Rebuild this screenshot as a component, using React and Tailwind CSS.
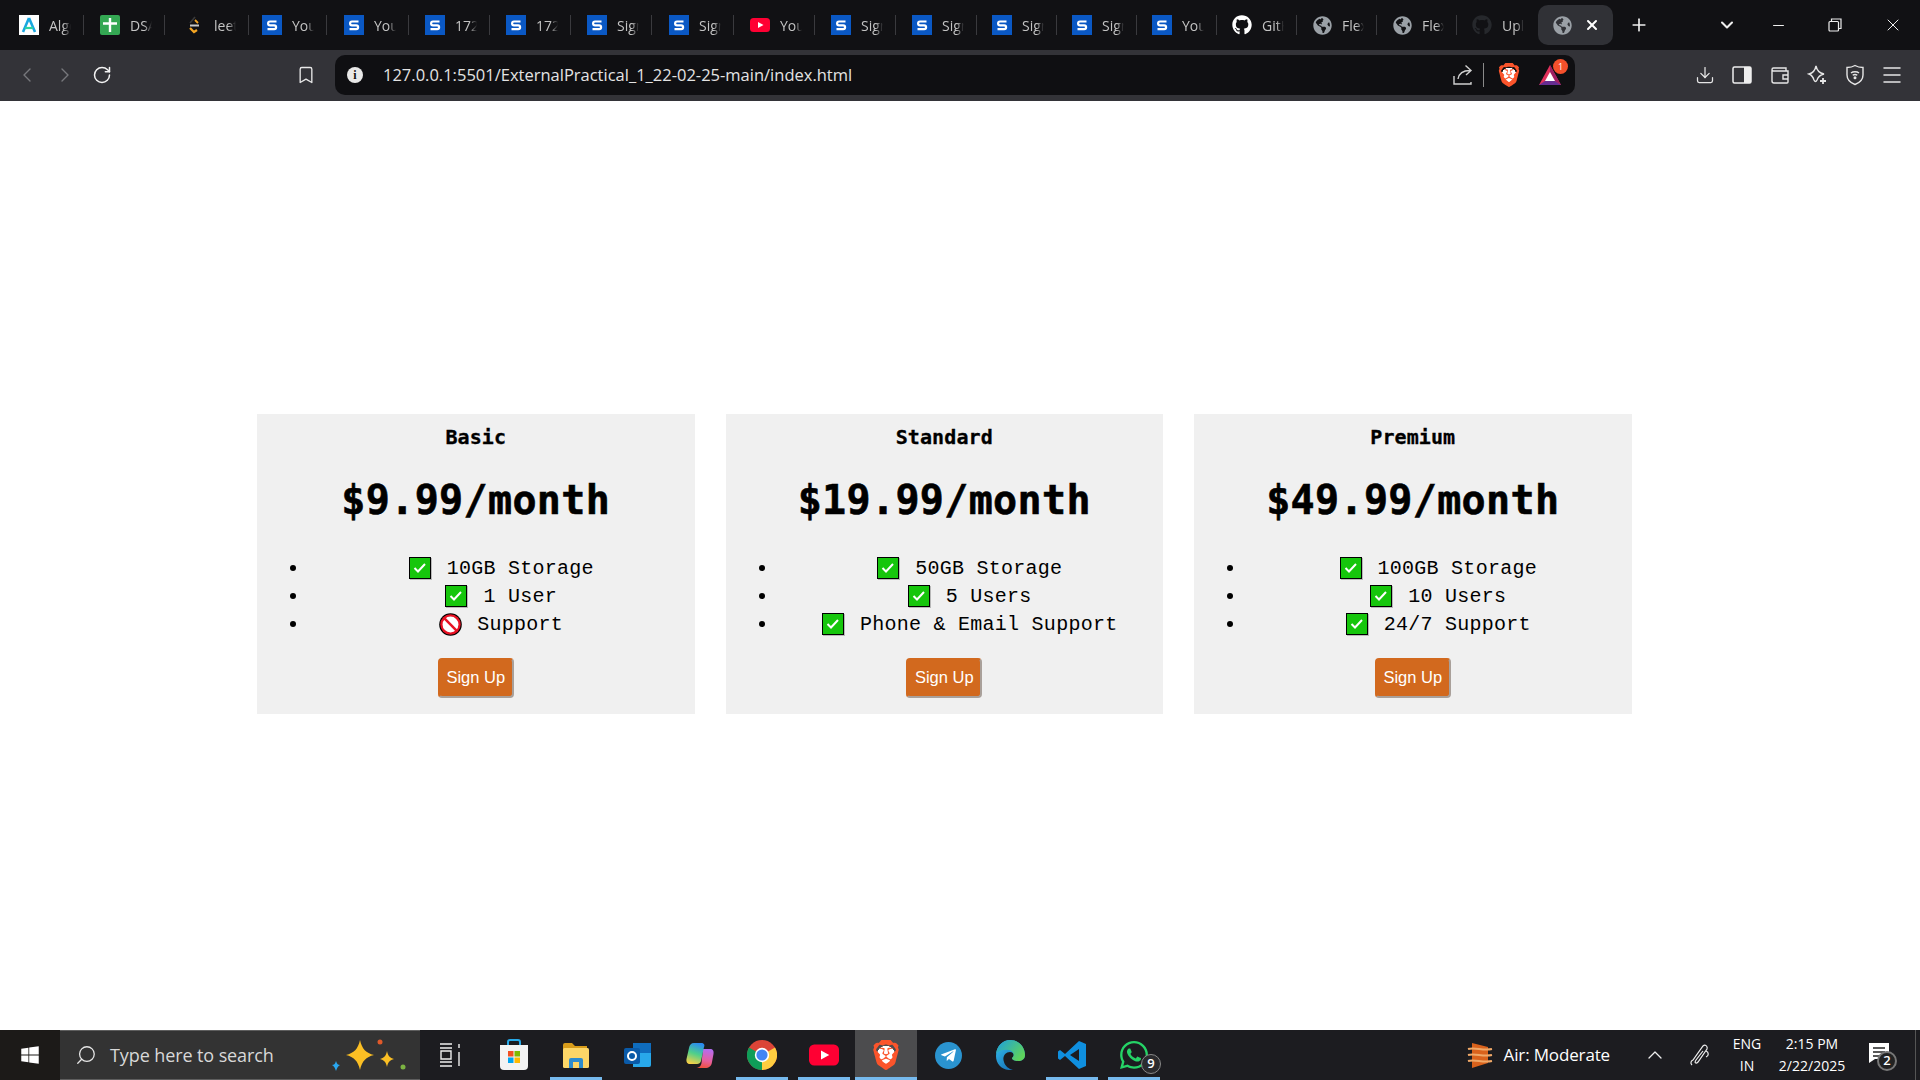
import {
  ChevronLeft,
  ChevronRight,
  ChevronDown,
  ChevronUp,
  RotateCw,
  Bookmark,
  Plus,
  Minus,
  X,
  Download,
  Menu,
  Search,
} from "lucide-react";
import { FaGithub, FaGlobeAmericas, FaWindows, FaWhatsapp, FaTelegramPlane } from "react-icons/fa";
import { SiBrave } from "react-icons/si";

const SANS = "font-['Open_Sans','Liberation_Sans',sans-serif]";

function SiteS() {
  return (
    <svg width="20" height="20" viewBox="0 0 20 20">
      <rect width="20" height="20" fill="#0a58c4" />
      <path d="M14.5 6.5 H8 a1.9 1.9 0 0 0 0 3.8 h4.2 a1.9 1.9 0 0 1 0 3.8 H5.5" fill="none" stroke="#fff" strokeWidth="2.2" />
    </svg>
  );
}

function AlgoIcon() {
  return (
    <svg width="20" height="20" viewBox="0 0 20 20">
      <rect width="20" height="20" fill="#fff" />
      <path d="M10 3 L4 17 M10 3 L16 17" stroke="#19a7e0" strokeWidth="2.6" fill="none" />
      <path d="M6 13 H14" stroke="#2fd3a0" strokeWidth="2.2" />
    </svg>
  );
}

function SheetIcon() {
  return (
    <svg width="20" height="20" viewBox="0 0 20 20">
      <rect width="20" height="20" rx="2" fill="#34a853" />
      <path d="M10 3 V17 M3 8.5 H17" stroke="#fff" strokeWidth="2.4" />
    </svg>
  );
}

function LeetIcon() {
  return (
    <svg width="20" height="20" viewBox="0 0 20 20">
      <path d="M11 2 L6 8" stroke="#3a3a3a" strokeWidth="1.6" fill="none" />
      <path d="M6 13 L10 17 L13 15" stroke="#f5a623" strokeWidth="2.2" fill="none" />
      <path d="M11 5 L14 8" stroke="#f5a623" strokeWidth="1.8" fill="none" />
      <path d="M6 10.5 H15" stroke="#c8c8c8" strokeWidth="2" />
    </svg>
  );
}

function YoutubeIcon({ size = 20 }) {
  return (
    <svg width={size} height={size} viewBox="0 0 20 20">
      <rect x="0" y="3" width="20" height="14" rx="3.5" fill="#ff0033" />
      <path d="M8 7 L13.5 10 L8 13 Z" fill="#fff" />
    </svg>
  );
}

function BraveIcon({ size }) {
  return (
    <span className="flex bg-[radial-gradient(circle,#fff_42%,transparent_44%)]">
      <SiBrave size={size} color="#fb542b" />
    </span>
  );
}

const tabs = [
  { w: 81, icon: <AlgoIcon />, label: "Algorithms" },
  { w: 84, icon: <SheetIcon />, label: "DSA Sheet" },
  { w: 78, icon: <LeetIcon />, label: "leetcode" },
  { w: 82, icon: <SiteS />, label: "Your" },
  { w: 81, icon: <SiteS />, label: "Your" },
  { w: 81, icon: <SiteS />, label: "172.16" },
  { w: 81, icon: <SiteS />, label: "172.16" },
  { w: 82, icon: <SiteS />, label: "Sign" },
  { w: 81, icon: <SiteS />, label: "Sign" },
  { w: 81, icon: <YoutubeIcon />, label: "YouTube" },
  { w: 81, icon: <SiteS />, label: "Sign" },
  { w: 80, icon: <SiteS />, label: "Sign" },
  { w: 80, icon: <SiteS />, label: "Sign" },
  { w: 80, icon: <SiteS />, label: "Sign" },
  { w: 80, icon: <SiteS />, label: "Your" },
  { w: 80, icon: <FaGithub size={20} color="#fff" />, label: "GitHub" },
  { w: 80, icon: <FaGlobeAmericas size={19} color="#9aa0a6" />, label: "Flex" },
  { w: 80, icon: <FaGlobeAmericas size={19} color="#9aa0a6" />, label: "Flex" },
  { w: 66, icon: <FaGithub size={20} color="#26282c" />, label: "Upload", last: true },
];

function TabBar() {
  return (
    <div className="flex h-[50px] shrink-0 items-center bg-[#111114] pl-[19px]">
      {tabs.map((tab, i) => (
        <div key={i} className="relative flex h-[40px] shrink-0 items-center" style={{ width: tab.w }}>
          <span className="flex w-[20px] justify-center">{tab.icon}</span>
          <span className={`ml-[10px] w-[22px] overflow-hidden whitespace-nowrap text-[14px] text-[#c4c4c4] [mask-image:linear-gradient(90deg,#000_65%,transparent)] ${SANS}`}>
            {tab.label}
          </span>
          {!tab.last && <span className="absolute left-[64px] top-[10px] h-[20px] w-px bg-[#3a3a3e]" />}
        </div>
      ))}
      <div className="flex h-[40px] w-[75px] shrink-0 items-center rounded-[10px] bg-[#303136] pl-[15px]">
        <FaGlobeAmericas size={19} color="#9aa0a6" />
        <X size={16} strokeWidth={3} color="#fff" className="ml-[12px]" />
      </div>
      <Plus size={20} strokeWidth={2} color="#eee" className="ml-[16px]" />
      <ChevronDown size={20} strokeWidth={2.5} color="#eee" className="ml-[68px]" />
      <Minus size={17} strokeWidth={1.5} color="#eee" className="ml-[33px]" />
      <svg width="14" height="14" viewBox="0 0 14 14" className="ml-[41px]" fill="none" stroke="#eee" strokeWidth="1.2">
        <rect x="1" y="3.5" width="9.5" height="9.5" rx="1" />
        <path d="M3.5 3.5 V1 H13 V10.5 H10.5" />
      </svg>
      <X size={20} strokeWidth={1.2} color="#eee" className="ml-[41px]" />
    </div>
  );
}

function Toolbar() {
  return (
    <div className="flex h-[51px] shrink-0 items-center bg-[#333338] pb-[1px]">
      <ChevronLeft size={24} strokeWidth={1.4} color="#77787c" className="ml-[15px]" />
      <ChevronRight size={24} strokeWidth={1.4} color="#77787c" className="ml-[14px]" />
      <RotateCw size={20} strokeWidth={1.8} color="#f2f2f2" className="ml-[15px]" />
      <Bookmark size={20} strokeWidth={1.6} color="#e8e8e8" className="ml-[184px]" />
      <div className="ml-[19px] flex h-[40px] w-[1240px] items-center rounded-[10px] bg-[#0f0f12] pl-[12px]">
        <span className="flex h-[16px] w-[16px] items-center justify-center rounded-full bg-[#e8e8e8] font-['Liberation_Serif',serif] text-[12px] font-bold leading-none text-[#111]">
          i
        </span>
        <span className={`ml-[20px] whitespace-nowrap text-[16.5px] text-[#e3e3e3] ${SANS}`}>
          127.0.0.1:5501/ExternalPractical_1_22-02-25-main/index.html
        </span>
        <div className="ml-auto flex items-center pr-[13px]">
          <svg width="20" height="22" viewBox="0 0 20 22" fill="none" stroke="#d0d0d0" strokeWidth="1.4">
            <path d="M1 12 V20 H18 V18 M5 15 C6 9 10 6.5 17 6.5 M12.5 1.5 L18 6.5 L13 11" />
          </svg>
          <span className="ml-[10px] h-[24px] w-px bg-[#8a8a8a]" />
          <span className="ml-[13px]">
            <BraveIcon size={24} />
          </span>
          <div className="relative ml-[17px] h-[24px] w-[24px]">
            <svg width="24" height="24" viewBox="0 0 24 24">
              <path d="M12 2 L23 22 H1 Z" fill="#e0315b" />
              <path d="M12 2 L23 22 L17 18 L12 9 Z" fill="#9e1f63" />
              <path d="M12 9 L17 18 H7 Z" fill="#fff" />
              <path d="M1 22 L7 18 H17 L23 22 Z" fill="#662d91" />
            </svg>
            <span className={`absolute -right-[6px] -top-[4px] flex h-[15px] w-[15px] items-center justify-center rounded-full bg-[#f4502c] text-[9px] leading-none text-white ${SANS}`}>
              1
            </span>
          </div>
        </div>
      </div>
      <Download size={20} strokeWidth={1.5} color="#e6e6e6" className="ml-[120px]" />
      <svg width="20" height="20" viewBox="0 0 20 20" className="ml-[17px]">
        <rect x="1" y="2" width="18" height="16" rx="1.5" fill="none" stroke="#eee" strokeWidth="1.5" />
        <rect x="12" y="2" width="7" height="16" fill="#eee" />
      </svg>
      <svg width="20" height="20" viewBox="0 0 20 20" className="ml-[18px]" fill="none" stroke="#e6e6e6" strokeWidth="1.4">
        <path d="M2 5 V16 a2 2 0 0 0 2 2 H17 a1 1 0 0 0 1 -1 V6 H3.5 A1.5 1.5 0 0 1 2 4.5 A1.5 1.5 0 0 1 3.5 3 H16 V6" />
        <path d="M18 10 H13 V14 H18" />
      </svg>
      <svg width="20" height="22" viewBox="0 0 20 22" className="ml-[17px]" fill="none" stroke="#e6e6e6" strokeWidth="1.4">
        <path d="M9 2 C10 7 12 9 17 10 C13 11 11 13 10 16 C9 18 8 18 7 16 C6 13 5 11 2 10 C6 9 8 7 9 2 Z" />
        <path d="M16 14 V20 M13 17 H19" strokeWidth="1.8" />
      </svg>
      <svg width="20" height="22" viewBox="0 0 20 22" className="ml-[18px]" fill="none" stroke="#e6e6e6" strokeWidth="1.4">
        <path d="M10 1.5 C12.5 3 15 3.5 18 3.5 V11 C18 16 14 19 10 20.5 C6 19 2 16 2 11 V3.5 C5 3.5 7.5 3 10 1.5 Z" />
        <path d="M6 9 C8 7.3 12 7.3 14 9 M7.7 11.3 C9 10.3 11 10.3 12.3 11.3" />
        <circle cx="10" cy="13.7" r="0.8" fill="#e6e6e6" />
      </svg>
      <Menu size={24} strokeWidth={1.5} color="#e6e6e6" className="ml-[15px]" />
    </div>
  );
}

function CheckIcon() {
  return (
    <svg width="23" height="23" viewBox="0 0 23 23" className="shrink-0">
      <rect x="1" y="1" width="22" height="22" fill="#b8b8b8" />
      <rect x="0" y="0" width="22" height="22" fill="#000" />
      <rect x="1" y="1" width="20" height="20" fill="#16c60c" />
      <path d="M5.5 11 L9 14.5 L16 7" fill="none" stroke="#fff" strokeWidth="2" />
    </svg>
  );
}

function NoIcon() {
  return (
    <svg width="23" height="23" viewBox="0 0 22 22" className="shrink-0">
      <circle cx="11" cy="11" r="10.8" fill="#000" />
      <circle cx="11" cy="11" r="9.8" fill="#e81224" />
      <circle cx="11" cy="11" r="7.6" fill="#fff" />
      <path d="M4.5 4.5 L17.5 17.5" stroke="#e81224" strokeWidth="2.4" />
    </svg>
  );
}

const plans = [
  {
    name: "Basic",
    price: "$9.99/month",
    features: [
      { ok: true, text: "10GB Storage" },
      { ok: true, text: "1 User" },
      { ok: false, text: "Support" },
    ],
  },
  {
    name: "Standard",
    price: "$19.99/month",
    features: [
      { ok: true, text: "50GB Storage" },
      { ok: true, text: "5 Users" },
      { ok: true, text: "Phone & Email Support" },
    ],
  },
  {
    name: "Premium",
    price: "$49.99/month",
    features: [
      { ok: true, text: "100GB Storage" },
      { ok: true, text: "10 Users" },
      { ok: true, text: "24/7 Support" },
    ],
  },
];

function PlanCard({ plan }) {
  return (
    <div className="flex h-[300px] w-[437.5px] flex-col items-center bg-[#f0f0f0] pt-[12px] font-['Liberation_Mono',monospace] text-black">
      <h3 className="font-['DejaVu_Sans_Mono',monospace] text-[20px] font-bold leading-[23px] tracking-[0.1px] [-webkit-text-stroke:0.3px_#000]">{plan.name}</h3>
      <h1 className="mt-[29px] font-['DejaVu_Sans_Mono',monospace] text-[40px] font-bold leading-[45px] tracking-[0.35px] [-webkit-text-stroke:0.6px_#000]">{plan.price}</h1>
      <ul className="mt-[31px] w-full list-disc pl-[51px] text-center text-[20px] leading-[28px] tracking-[0.25px]">
        {plan.features.map((f) => (
          <li key={f.text} className="h-[28px]">
            <span className="inline-flex h-[28px] items-center gap-[15px] align-top">
              {f.ok ? <CheckIcon /> : <NoIcon />}
              <span className="pt-[1px]">{f.text}</span>
            </span>
          </li>
        ))}
      </ul>
      <button className="mt-[20px] h-[40px] w-[76px] rounded-[4px] border-2 border-t-[#d2691e] border-l-[#d2691e] border-r-[#a9a09a] border-b-[#a9a09a] bg-[#d2691e] pb-[2px] font-['Liberation_Sans',sans-serif] text-[16.5px] text-white">
        Sign Up
      </button>
    </div>
  );
}

function ChromeIcon() {
  return (
    <svg width="30" height="30" viewBox="0 0 30 30">
      <circle cx="15" cy="15" r="15" fill="#db4437" />
      <path d="M15 15 L2 7.5 A15 15 0 0 0 15 30 Z" fill="#0f9d58" />
      <path d="M15 15 L28 7.5 A15 15 0 0 1 15 30 Z" fill="#ffcd40" />
      <circle cx="15" cy="15" r="7.2" fill="#fff" />
      <circle cx="15" cy="15" r="5.6" fill="#4285f4" />
    </svg>
  );
}

function CopilotIcon() {
  return (
    <svg width="28" height="26" viewBox="0 0 28 26">
      <defs>
        <linearGradient id="cpa" x1="0.6" y1="0" x2="0.3" y2="1">
          <stop offset="0" stopColor="#2a8cf0" />
          <stop offset="0.5" stopColor="#4fd08a" />
          <stop offset="1" stopColor="#f7d046" />
        </linearGradient>
        <linearGradient id="cpb" x1="0.6" y1="0" x2="0.4" y2="1">
          <stop offset="0" stopColor="#b46cf0" />
          <stop offset="0.6" stopColor="#e85f9c" />
          <stop offset="1" stopColor="#f0503c" />
        </linearGradient>
      </defs>
      <path d="M17 7 H24 C27 7 28 9 27.5 12 L26 20 C25.5 24 23 26 19 26 H9 C13 26 15 24 15.5 21 Z" fill="url(#cpb)" />
      <path d="M8 1 H15 C18 1 19 3 18 5 L15 19 C14.5 21 13 22 11 22 H4 C1.5 22 0 20 0.5 17 L3 6 C3.5 3 5 1 8 1 Z" fill="url(#cpa)" />
    </svg>
  );
}

function StoreIcon() {
  return (
    <svg width="30" height="32" viewBox="0 0 30 32">
      <path d="M9 7 V3 a2 2 0 0 1 2 -2 H19 a2 2 0 0 1 2 2 V7" fill="none" stroke="#27a9e8" strokeWidth="2" />
      <path d="M1 6 H29 V27 a4 4 0 0 1 -4 4 H5 a4 4 0 0 1 -4 -4 Z" fill="#f3f3f3" />
      <rect x="9" y="12" width="5.5" height="5.5" fill="#f25022" />
      <rect x="15.5" y="12" width="5.5" height="5.5" fill="#7fba00" />
      <rect x="9" y="18.5" width="5.5" height="5.5" fill="#00a4ef" />
      <rect x="15.5" y="18.5" width="5.5" height="5.5" fill="#ffb900" />
    </svg>
  );
}

function FilesIcon() {
  return (
    <svg width="28" height="26" viewBox="0 0 28 26">
      <path d="M1 3 a2 2 0 0 1 2 -2 H10 L13 4 H25 V10 H1 Z" fill="#d89c1a" />
      <rect x="1" y="6" width="26" height="20" rx="1.5" fill="#fcd667" />
      <path d="M7 26 V18 a2 2 0 0 1 2 -2 H19 a2 2 0 0 1 2 2 V26 H17 V20 H11 V26 Z" fill="#2d8ccd" />
    </svg>
  );
}

function OutlookIcon() {
  return (
    <svg width="30" height="28" viewBox="0 0 30 28">
      <path d="M10 2 H26 a2 2 0 0 1 2 2 V24 a2 2 0 0 1 -2 2 H10 Z" fill="#28a8ea" />
      <path d="M10 2 H28 V12 H10 Z" fill="#0f6cbd" />
      <rect x="1" y="7" width="16" height="16" rx="2" fill="#0a5aa8" />
      <circle cx="9" cy="15" r="4" fill="none" stroke="#fff" strokeWidth="2" />
    </svg>
  );
}

function EdgeIcon() {
  return (
    <svg width="30" height="30" viewBox="0 0 30 30">
      <defs>
        <linearGradient id="edg" x1="0" y1="0" x2="1" y2="1">
          <stop offset="0" stopColor="#35c1f1" />
          <stop offset="1" stopColor="#0c59a4" />
        </linearGradient>
        <linearGradient id="edh" x1="0" y1="0" x2="1" y2="0.6">
          <stop offset="0" stopColor="#1b9de2" />
          <stop offset="1" stopColor="#5ed35b" />
        </linearGradient>
      </defs>
      <path d="M1 16 C1 6 8 0 15 0 C24 0 30 7 30 15 C30 19 27 21 23 21 C20 21 17 20 17 18 C20 16 19 12 15 12 C10 12 7 17 9 22 C10 26 14 29 18 30 C8 31 1 25 1 16 Z" fill="url(#edg)" />
      <path d="M1 14 C2 5 9 0 15 0 C24 0 30 7 30 15 C30 19 27 21 23 21 C20 21 17 20 17 18 C20 16 19 11 14 10 C8 9 3 11 1 14 Z" fill="url(#edh)" />
    </svg>
  );
}

function VscodeIcon() {
  return (
    <svg width="30" height="30" viewBox="0 0 30 30">
      <path d="M22 1 L29 4 V26 L22 29 L8 16 L3 20 L1 18.5 V11.5 L3 10 L8 14 Z M22 9 L13 15 L22 21 Z" fill="#0f8fdf" fillRule="evenodd" />
    </svg>
  );
}

const taskIcons = [
  { w: 62, icon: <StoreIcon /> },
  { w: 62, icon: <FilesIcon />, running: true },
  { w: 62, icon: <OutlookIcon /> },
  { w: 62, icon: <CopilotIcon /> },
  { w: 62, icon: <ChromeIcon />, running: true },
  { w: 62, icon: <YoutubeIcon size={30} />, running: true },
  { w: 62, icon: <BraveIcon size={30} />, active: true },
  {
    w: 62,
    icon: (
      <span className="flex h-[27px] w-[27px] items-center justify-center rounded-full bg-[#2a93cf]">
        <FaTelegramPlane size={17} color="#fff" />
      </span>
    ),
  },
  { w: 62, icon: <EdgeIcon /> },
  { w: 62, icon: <VscodeIcon />, running: true },
  { w: 62, icon: <FaWhatsapp size={32} color="#25d366" />, running: true, badge: "9" },
];

function Taskbar() {
  return (
    <div className={`flex h-[50px] shrink-0 items-center bg-[#1c1c20] text-white ${SANS}`}>
      <div className="flex h-full w-[60px] items-center justify-center bg-[#1c1a18]">
        <FaWindows size={20} color="#fff" />
      </div>
      <div className="flex h-full w-[360px] items-center border-y border-[#5e5e5e] bg-[#333333] pl-[15px]">
        <Search size={22} strokeWidth={1.4} color="#e6e6e6" className="-scale-x-100" />
        <span className="ml-[13px] text-[18px] tracking-[-0.1px] text-[#d8d8d8]">Type here to search</span>
        <svg width="78" height="36" viewBox="0 0 78 36" className="ml-auto mr-[12px]">
          <path d="M30 3 C32 12 36 16 44 18 C36 20 32 24 30 33 C28 24 24 20 16 18 C24 16 28 12 30 3 Z" fill="#fbbf24" />
          <path d="M57 14 C58 19 60 21 64 22 C60 23 58 25 57 30 C56 25 54 23 50 22 C54 21 56 19 57 14 Z" fill="#fbbf24" />
          <path d="M6 24 C7 27 8 28 10 28 C8 29 7 31 6 34 C5 31 4 29 2 28 C4 28 5 27 6 24 Z" fill="#2aa7f0" />
          <circle cx="50" cy="5" r="2.5" fill="#e0592a" />
          <circle cx="73" cy="30" r="2.5" fill="#7cb342" />
        </svg>
      </div>
      <div className="flex h-full w-[63px] items-center justify-center pr-[4px]">
        <svg width="22" height="24" viewBox="0 0 22 24" fill="none" stroke="#eee" strokeWidth="1.4">
          <path d="M1 1 H13 M1 5 H13 M2 8 H12 V16 H2 Z M1 19 H13 M1 23 H13" />
          <path d="M20 1 V5 M20 9 V23" />
        </svg>
      </div>
      {taskIcons.map((t, i) => (
        <div
          key={i}
          className={`relative flex h-full shrink-0 items-center justify-center ${t.active ? "bg-[#4c4c4e]" : ""}`}
          style={{ width: t.w }}
        >
          {t.icon}
          {t.badge && (
            <span className="absolute left-[38px] top-[24px] flex h-[20px] w-[20px] items-center justify-center rounded-full border border-[#888] bg-[#2b2b2e] text-[13px] font-semibold">
              {t.badge}
            </span>
          )}
          {(t.running || t.active) && (
            <span className={`absolute bottom-0 h-[3px] bg-[#76b9ed] ${t.active ? "inset-x-0" : "inset-x-[5px]"}`} />
          )}
        </div>
      ))}
      <div className="ml-auto flex h-full items-center pr-[4px]">
        <svg width="26" height="30" viewBox="0 0 26 30" className="-ml-[4px]">
          <path d="M5 3 L21 7 V23 L5 28 Z" fill="#d9621c" />
          <path d="M1 9 C8 7 16 11 25 9 M1 15 C8 13 16 17 25 15 M1 21 C8 19 16 23 25 21" stroke="#f0a868" strokeWidth="2.2" fill="none" />
        </svg>
        <span className="ml-[11px] text-[17px] tracking-[-0.15px]">Air: Moderate</span>
        <ChevronUp size={24} strokeWidth={1.3} color="#eee" className="ml-[33px]" />
        <svg width="22" height="24" viewBox="0 0 22 24" className="ml-[22px]" fill="none" stroke="#eee" strokeWidth="1.2">
          <path d="M3 22 C1 20 2 18 4 17 L14 3 C16 1 19 3 18 6 L9 19 C7 21 5 20 7 17 L14 8" />
          <path d="M17 8 C20 9 20 13 17 14" />
        </svg>
        <div className="ml-[16px] flex w-[40px] flex-col items-center text-[14px] leading-[22px]">
          <span>ENG</span>
          <span>IN</span>
        </div>
        <div className="ml-[9px] flex w-[72px] flex-col items-center text-[14px] leading-[22px]">
          <span>2:15 PM</span>
          <span>2/22/2025</span>
        </div>
        <div className="relative ml-[20px] mr-[21px] h-[30px] w-[26px]">
          <svg width="22" height="22" viewBox="0 0 22 22" className="mt-[2px]">
            <path d="M1 1 H21 V17 H7 L1 21 Z" fill="#fff" />
            <path d="M5 6 H17 M5 10 H17 M5 14 H13" stroke="#222" strokeWidth="1.4" />
          </svg>
          <span className="absolute left-[9px] top-[11px] flex h-[20px] w-[20px] items-center justify-center rounded-full border-2 border-[#777] bg-[#222] text-[13px] font-semibold">
            2
          </span>
        </div>
        <span className="h-full w-px bg-[#555]" />
      </div>
    </div>
  );
}

export default function App() {
  return (
    <div className="flex h-screen w-full flex-col overflow-hidden bg-white">
      <TabBar />
      <Toolbar />
      <div className="flex flex-1 items-start gap-[31px] pl-[257px] pt-[313px]">
        {plans.map((plan) => (
          <PlanCard key={plan.name} plan={plan} />
        ))}
      </div>
      <Taskbar />
    </div>
  );
}
